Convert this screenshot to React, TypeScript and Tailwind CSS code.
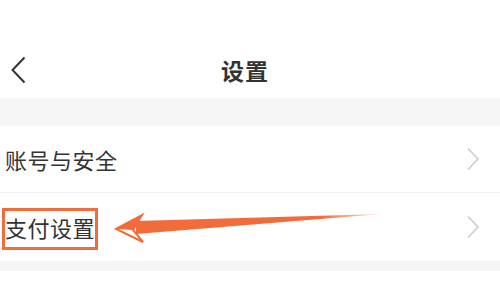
export default function App() {
	const font = { fontFamily: '"Noto Sans CJK SC", "Noto Sans", sans-serif' };

	return (
		<div className="w-[500px] h-[289px] bg-white overflow-hidden text-[#333]" style={font}>
			{/* status bar space */}
			<div className="h-[42px]" />

			{/* nav bar */}
			<div className="relative h-[56px] flex items-center justify-center">
				<svg
					className="absolute left-[10px] top-[14px]"
					width="17"
					height="28"
					viewBox="0 0 17 28"
					fill="none"
				>
					<path d="M14.5 1.5 L2.5 14 L14.5 26.5" stroke="#333" strokeWidth="2" strokeLinejoin="miter" />
				</svg>
				<span className="mr-[10px] text-[23px] font-bold tracking-[1px]">设置</span>
			</div>

			<div className="h-[28px] bg-[#f5f5f5]" />

			<div className="relative">
				<div className="h-[67px] flex items-center justify-between pl-[5px] pr-[20px] border-b border-[#f0f0f0]">
					<span className="text-[22px] leading-none tracking-[0.5px]">账号与安全</span>
					<Chevron />
				</div>
				<div className="h-[68px] flex items-center justify-between pl-[5px] pr-[20px]">
					<span className="text-[22px] leading-none tracking-[0.5px]">支付设置</span>
					<Chevron />
				</div>

				{/* annotation overlay */}
				<div className="absolute left-[2px] top-[82px] w-[96px] h-[42px] border-[3px] border-[#f26b3a]" />
				<svg className="absolute left-0 top-0" width="500" height="136" viewBox="0 126 500 136">
					<defs>
						<linearGradient id="shaft" x1="137" y1="0" x2="382" y2="0" gradientUnits="userSpaceOnUse">
							<stop offset="0" stopColor="#f26b3a" />
							<stop offset="0.75" stopColor="#f26b3a" />
							<stop offset="1" stopColor="#f7b59c" stopOpacity="0.5" />
						</linearGradient>
					</defs>
					<polygon points="136,221 382,214 136,234" fill="url(#shaft)" />
					<polygon
						points="116,229 142,215 133,230 143,242"
						fill="#ffffff"
						stroke="#f26b3a"
						strokeWidth="2"
						strokeLinejoin="miter"
					/>
					<polygon points="116,229 142,215 133,230" fill="#f26b3a" />
				</svg>
			</div>

			<div className="h-[10px] bg-[#f5f5f5]" />
		</div>
	);
}

function Chevron() {
	return (
		<svg width="14" height="24" viewBox="0 0 14 24" fill="none">
			<path d="M2 1.5 L12 12 L2 22.5" stroke="#cdcdcd" strokeWidth="1.6" />
		</svg>
	);
}
